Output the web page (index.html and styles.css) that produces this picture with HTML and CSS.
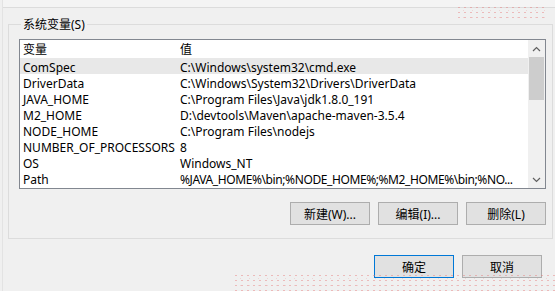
FILE: index.html
```html
<!DOCTYPE html>
<html lang="zh-CN">
<head>
<meta charset="utf-8">
<title>系统变量</title>
<link rel="stylesheet" href="styles.css">
</head>
<body>
<div class="dialog">
  <div class="prev"></div>
  <fieldset class="group">
    <legend>系统变量(S)</legend>
    <div class="list">
      <div class="list-main">
        <div class="row head"><span class="c1">变量</span><span class="c2">值</span></div>
        <div class="row sel"><span class="c1">ComSpec</span><span class="c2">C:\Windows\system32\cmd.exe</span></div>
        <div class="row"><span class="c1">DriverData</span><span class="c2">C:\Windows\System32\Drivers\DriverData</span></div>
        <div class="row"><span class="c1">JAVA_HOME</span><span class="c2">C:\Program Files\Java\jdk1.8.0_191</span></div>
        <div class="row"><span class="c1">M2_HOME</span><span class="c2">D:\devtools\Maven\apache-maven-3.5.4</span></div>
        <div class="row"><span class="c1">NODE_HOME</span><span class="c2">C:\Program Files\nodejs</span></div>
        <div class="row"><span class="c1">NUMBER_OF_PROCESSORS</span><span class="c2">8</span></div>
        <div class="row"><span class="c1">OS</span><span class="c2">Windows_NT</span></div>
        <div class="row"><span class="c1">Path</span><span class="c2 tight">%JAVA_HOME%\bin;%NODE_HOME%;%M2_HOME%\bin;%NO...</span></div>
      </div>
      <div class="scroll">
        <div class="arrow">
          <svg width="9" height="6" viewBox="0 0 9 6"><path d="M1 5 L4.5 1.5 L8 5" fill="none" stroke="#606060" stroke-width="1.2"/></svg>
        </div>
        <div class="track"><div class="thumb"></div></div>
        <div class="arrow">
          <svg width="9" height="6" viewBox="0 0 9 6"><path d="M1 1 L4.5 4.5 L8 1" fill="none" stroke="#606060" stroke-width="1.2"/></svg>
        </div>
      </div>
    </div>
    <div class="btns">
      <button class="btn">新建(W)...</button>
      <button class="btn">编辑(I)...</button>
      <button class="btn">删除(L)</button>
    </div>
  </fieldset>
  <div class="footer">
    <button class="btn default">确定</button>
    <button class="btn">取消</button>
  </div>
  <div class="wm wm-top"></div>
  <div class="wm wm-bottom"></div>
</div>
</body>
</html>
```

FILE: styles.css
```css
* { box-sizing: border-box; }
html, body { margin: 0; padding: 0; }
body {
  width: 555px;
  height: 291px;
  overflow: hidden;
  background: #f0f0f0;
  font-family: "Noto Sans", "Noto Sans CJK SC", sans-serif;
  font-size: 12px;
  color: #000;
}
.dialog {
  position: relative;
  width: 553px;
  height: 291px;
  border-left: 1px solid #e3e3e3;
  margin-left: 2px;
  background: #f0f0f0;
}
.prev {
  height: 8px;
  border-bottom: 1px solid #dcdcdc;
  background: #f4f4f4;
}
.group {
  margin: 8px 2px 0 5px;
  padding: 7px 6px 13px 10px;
  border: 1px solid #dcdcdc;
  min-width: 0;
}
.group legend {
  padding: 0 2px;
  margin-left: 2px;
  line-height: 16px;
  height: 16px;
  padding-top: 1px;
}
.list {
  display: flex;
  height: 150px;
  border: 1px solid #828790;
  background: #fff;
}
.list-main {
  flex: 1;
  min-width: 0;
  display: flex;
  flex-direction: column;
}
.row {
  display: flex;
  height: 16px;
  line-height: 20px;
  white-space: nowrap;
}
.row.head {
  height: 18px;
  line-height: 20px;
}
.row.sel { background: #e8e8e8; }
.c1 { width: 160px; padding-left: 3px; flex: none; }
.c2 { flex: 1; }
.c2.tight { letter-spacing: -0.4px; }
.scroll {
  width: 17px;
  flex: none;
  display: flex;
  flex-direction: column;
  background: #f0f0f0;
}
.arrow {
  height: 17px;
  display: flex;
  align-items: center;
  justify-content: center;
}
.track { flex: 1; padding: 0 1px; }
.thumb { height: 43px; background: #cdcdcd; }
.btns {
  display: flex;
  justify-content: flex-end;
  gap: 8px;
  margin-top: 13px;
}
.btn {
  width: 80px;
  height: 23px;
  border: 1px solid #adadad;
  background: #e1e1e1;
  font: inherit;
  color: #000;
  padding: 0;
}
.btn.default { border-color: #0078d7; }
.footer {
  display: flex;
  justify-content: flex-end;
  gap: 8px;
  margin-top: 16px;
  padding-right: 13px;
}
.wm {
  position: absolute;
  background-image:
    radial-gradient(circle, rgba(230,120,120,0.45) 0.7px, transparent 1px),
    radial-gradient(circle, rgba(230,150,150,0.3) 0.6px, transparent 1px);
  background-size: 6px 5px, 9px 7px;
  background-position: 0 0, 3px 2px;
}
.wm-top { left: 453px; top: 5px; width: 92px; height: 15px; }
.wm-bottom { left: 230px; top: 273px; width: 325px; height: 18px; }
```
